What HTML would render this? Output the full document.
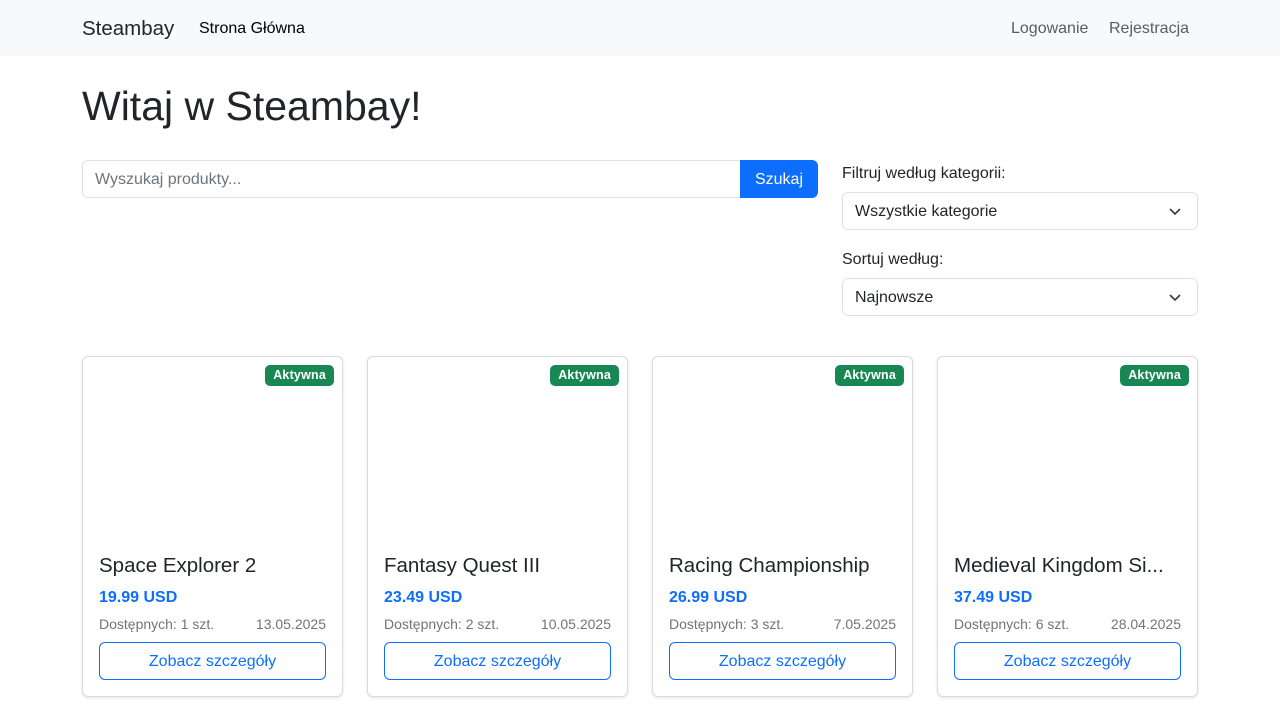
<!DOCTYPE html>
<html><head><meta charset="utf-8"><style>
*{box-sizing:border-box;margin:0;padding:0}
body{width:1280px;height:720px;overflow:hidden;background:#fff;font-family:"Liberation Sans","Noto Sans CJK SC",sans-serif;color:#212529;font-size:16px;position:relative}
.a{position:absolute;white-space:nowrap}
nav{position:absolute;left:0;top:0;width:1280px;height:56px;background:#f8f9fa}
.inp{position:absolute;border:1px solid #dee2e6;border-radius:6px;background:#fff;padding:2px 12px 0;display:flex;align-items:center;color:#212529}
.chev{position:absolute;right:16px;top:13px}
.card{position:absolute;top:356px;width:261px;height:341px;border:1px solid #dadada;border-radius:6px;box-shadow:0 1px 3px rgba(0,0,0,.1);background:#fff}
.badge{position:absolute;right:8px;top:8px;background:#198754;color:#fff;font-weight:bold;font-size:12.5px;border-radius:5px;padding:3px 8px;height:21px;line-height:15px;letter-spacing:.2px}
.t{position:absolute;left:16px;top:197px;font-size:20.5px}
.p{position:absolute;left:16px;top:232px;font-size:16px;font-weight:bold;color:#0d6efd}
.s{position:absolute;left:16px;right:16px;top:259px;font-size:14px;color:#6c757d;display:flex;justify-content:space-between}
.b{position:absolute;left:16px;right:16px;top:285px;height:38px;border:1px solid #0d6efd;border-radius:6px;color:#0d6efd;text-align:center;line-height:38px;font-size:16px}
</style></head><body>
<nav>
<div class="a" style="left:82px;top:17px;font-size:20.5px">Steambay</div>
<div class="a" style="left:199px;top:20px;font-size:16px;color:#000">Strona Główna</div>
<div class="a" style="left:1011px;top:20px;color:#595c5f">Logowanie</div>
<div class="a" style="left:1109px;top:20px;color:#595c5f">Rejestracja</div>
</nav>
<div class="a" style="left:82px;top:82px;font-size:41px;line-height:48px">Witaj w Steambay!</div>
<div class="inp" style="left:82px;top:160px;width:660px;height:38px;border-radius:6px 0 0 6px;color:#6c757d">Wyszukaj produkty...</div>
<div class="a" style="left:740px;top:160px;width:78px;height:38px;background:#0d6efd;color:#fff;border-radius:0 6px 6px 0;text-align:center;line-height:40px">Szukaj</div>
<div class="a" style="left:842px;top:165px">Filtruj według kategorii:</div>
<div class="inp" style="left:842px;top:192px;width:356px;height:38px">Wszystkie kategorie<svg class="chev" width="12" height="10" viewBox="0 0 12 10"><path d="M1 3l5 5 5-5" fill="none" stroke="#343a40" stroke-width="1.6"/></svg></div>
<div class="a" style="left:842px;top:251px">Sortuj według:</div>
<div class="inp" style="left:842px;top:278px;width:356px;height:38px">Najnowsze<svg class="chev" width="12" height="10" viewBox="0 0 12 10"><path d="M1 3l5 5 5-5" fill="none" stroke="#343a40" stroke-width="1.6"/></svg></div>

<div class="card" style="left:82px"><div class="badge">Aktywna</div><div class="t">Space Explorer 2</div><div class="p">19.99 USD</div><div class="s"><span>Dostępnych: 1 szt.</span><span>13.05.2025</span></div><div class="b">Zobacz szczegóły</div></div>
<div class="card" style="left:367px"><div class="badge">Aktywna</div><div class="t">Fantasy Quest III</div><div class="p">23.49 USD</div><div class="s"><span>Dostępnych: 2 szt.</span><span>10.05.2025</span></div><div class="b">Zobacz szczegóły</div></div>
<div class="card" style="left:652px"><div class="badge">Aktywna</div><div class="t">Racing Championship</div><div class="p">26.99 USD</div><div class="s"><span>Dostępnych: 3 szt.</span><span>7.05.2025</span></div><div class="b">Zobacz szczegóły</div></div>
<div class="card" style="left:937px"><div class="badge">Aktywna</div><div class="t">Medieval Kingdom Si...</div><div class="p">37.49 USD</div><div class="s"><span>Dostępnych: 6 szt.</span><span>28.04.2025</span></div><div class="b">Zobacz szczegóły</div></div>
</body></html>
